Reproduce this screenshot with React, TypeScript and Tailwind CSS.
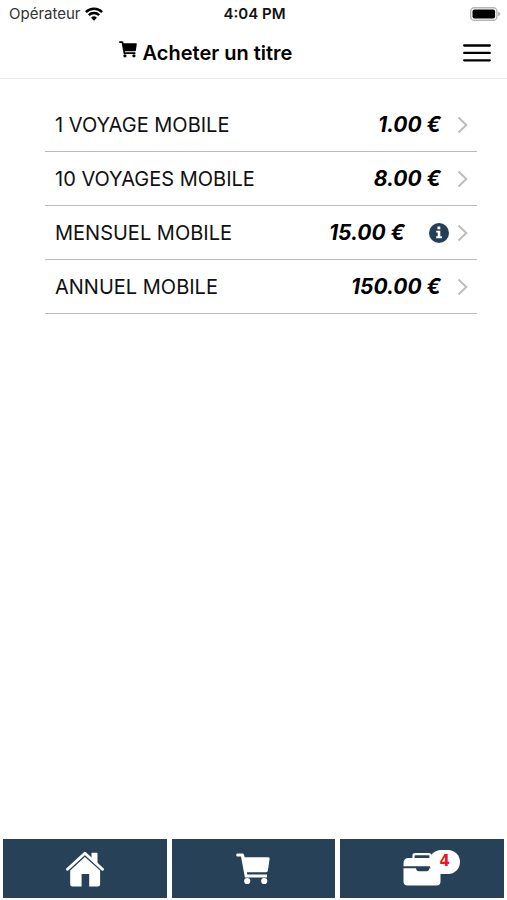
const titres = [
    { id: 1, name: "1 VOYAGE MOBILE", price: "1.00 €", info: false },
    { id: 2, name: "10 VOYAGES MOBILE", price: "8.00 €", info: false },
    { id: 3, name: "MENSUEL MOBILE", price: "15.00 €", info: true },
    { id: 4, name: "ANNUEL MOBILE", price: "150.00 €", info: false },
]

function CartIcon({ className }: { className: string }) {
    return (
        <svg viewBox="0 0 34 32" className={className} fill="currentColor" aria-hidden="true">
            <path d="M1.2 0.4H6.6Q7.6 0.4 7.9 1.4L8.7 4.2H32.3Q33.8 4.2 33.6 5.8L31.9 17.6Q31.6 19.2 30.1 19.2H10.9L11.3 21.4H31V24.6H8.9L5 3.6H1.2Q0.2 3.6 0.2 2T1.2 0.4Z" />
            <circle cx="11.2" cy="28" r="3.1" />
            <circle cx="28.2" cy="28" r="3.1" />
        </svg>
    )
}

function StatusBar() {
    return (
        <div className="grid grid-cols-3 items-center h-7 pl-[9px] pr-[7px] text-[#111111]">
            <div className="flex items-center gap-1">
                <span className="text-[15px] text-[#333333]">Opérateur</span>
                <svg viewBox="0 0 18 14" className="w-[18px] h-[14px]" fill="none" stroke="#000000" strokeWidth="2.5" aria-hidden="true">
                    <path d="M0.9 5.1A11.6 11.6 0 0 1 17.1 5.1" />
                    <path d="M3.8 8.2A7.4 7.4 0 0 1 14.2 8.2" />
                    <path d="M9 13.8L6.1 10.8A4.1 4.1 0 0 1 11.9 10.8Z" fill="#000000" stroke="none" />
                </svg>
            </div>
            <span className="text-center text-[15px] font-semibold">4:04 PM</span>
            <svg viewBox="0 0 30 14" className="w-[30px] h-[14px] justify-self-end" aria-hidden="true">
                <rect x="0.7" y="0.7" width="26.2" height="12.6" rx="3.6" fill="#ffffff" stroke="#b5b5b5" strokeWidth="1.4" />
                <rect x="2.5" y="2.5" width="22.6" height="9" rx="2" fill="#000000" />
                <path d="M28.2 4.8Q30 5.4 30 7T28.2 9.2Z" fill="#a5a5a5" />
            </svg>
        </div>
    )
}

function Header() {
    return (
        <header className="grid grid-cols-[1fr_auto_1fr] items-center h-[51px] px-4 border-b border-[#ebebeb]">
            <span />
            <h1 className="flex items-center gap-[6px] pr-24 text-[20px] font-semibold text-black">
                <CartIcon className="w-[18px] h-[17px] mb-2" />
                Acheter un titre
            </h1>
            <button type="button" aria-label="Menu" className="justify-self-end">
                <svg viewBox="0 0 28 18" className="w-7 h-[18px]" stroke="#000000" strokeWidth="2.3" strokeLinecap="round" aria-hidden="true">
                    <path d="M1.2 1.5H26.8M1.2 8.9H26.8M1.2 16.3H26.8" />
                </svg>
            </button>
        </header>
    )
}

export default function App() {
    return (
        <div className="flex flex-col min-h-screen bg-white font-['Inter','Liberation_Sans',sans-serif]">
            <StatusBar />
            <Header />
            <main className="flex-1 pt-[19px] pl-[45px] pr-[30px]">
                <ul>
                    {titres.map((titre) => (
                        <li key={titre.id} className="flex items-center h-[54px] pl-[10px] pr-[9px] border-b border-[#bcbcbc]">
                            <span className="flex-1 text-[20px] text-[#111111]">{titre.name}</span>
                            <span className="text-[21px] font-bold italic text-black">{titre.price}</span>
                            {titre.info && (
                                <button type="button" aria-label="Informations" className="ml-6">
                                    <svg viewBox="0 0 20 20" className="w-5 h-5" aria-hidden="true">
                                        <circle cx="10" cy="10" r="10" fill="#233e56" />
                                        <path d="M8.4 3.6H11.3V6.3H8.4ZM7.2 7.7H11.3V13.3H12.9V15.3H7.2V13.3H8.7V9.6H7.2Z" fill="#ffffff" />
                                    </svg>
                                </button>
                            )}
                            <svg viewBox="0 0 11 18" className={titre.info ? "w-[11px] h-[18px] ml-2" : "w-[11px] h-[18px] ml-4"} fill="none" stroke="#bdbdbd" strokeWidth="2" aria-hidden="true">
                                <path d="M1.5 1.5L9.3 9L1.5 16.5" />
                            </svg>
                        </li>
                    ))}
                </ul>
            </main>
            <nav className="grid grid-cols-3 gap-[5px] px-[3px] pb-[2px] text-white">
                <a href="#accueil" aria-label="Accueil" className="flex items-center justify-center h-[59px] bg-[#264158]">
                    <svg viewBox="0 0 38 36" className="w-[38px] h-9" fill="currentColor" aria-hidden="true">
                        <path d="M25.5 6.8V2.6Q25.5 1.8 26.3 1.8H30.7Q31.5 1.8 31.5 2.6V12.5Z" />
                        <path d="M1.5 18.3L18.9 2.2L36.5 18.3" fill="none" stroke="currentColor" strokeWidth="2.9" strokeLinecap="round" strokeLinejoin="round" />
                        <path d="M4.2 19.4L18.9 5.9L34.1 19.4V33Q34.1 35.5 31.6 35.5H23.2V23H15.6V35.5H6.7Q4.2 35.5 4.2 33Z" />
                    </svg>
                </a>
                <a href="#acheter" aria-label="Acheter" className="flex items-center justify-center h-[59px] bg-[#264158]">
                    <CartIcon className="w-[34px] h-8" />
                </a>
                <a href="#titres" aria-label="Mes titres" className="flex items-center justify-center h-[59px] bg-[#264158]">
                    <span className="relative">
                        <svg viewBox="0 0 38 34" className="w-[38px] h-[34px]" aria-hidden="true">
                            <path d="M10.5 6V3.8Q10.5 2.2 12.1 2.2H25.9Q27.5 2.2 27.5 3.8V6" fill="none" stroke="currentColor" strokeWidth="2.2" />
                            <path d="M5.5 6H33Q37.5 6 37.5 11V14.2H0.5V11.5Q0.5 6 5.5 6Z" fill="currentColor" />
                            <path d="M0.5 16.2H13Q13.4 19.2 15.8 19.2H23.6Q26 19.2 26.4 16.2H37.5V29.5Q37.5 33.5 33.5 33.5H4.5Q0.5 33.5 0.5 29.5Z" fill="currentColor" />
                        </svg>
                        <span className="absolute left-[26px] top-[-2px] flex items-center justify-center w-[31px] h-6 rounded-full bg-white font-['DejaVu_Sans',sans-serif] text-[15px] font-bold text-[#ee1520]">4</span>
                    </span>
                </a>
            </nav>
        </div>
    )
}
